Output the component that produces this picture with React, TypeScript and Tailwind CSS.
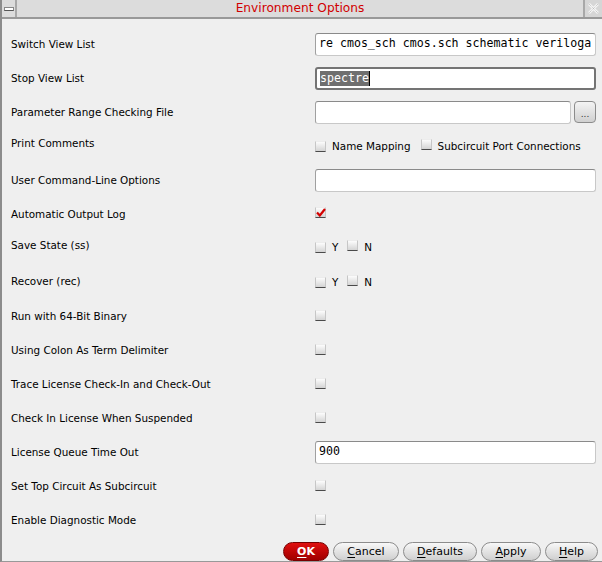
import React from "react";

const labelFont = { fontFamily: '"DejaVu Sans", sans-serif' };

function Checkbox({ checked = false }: { checked?: boolean }) {
  return (
    <span className="relative inline-block w-[11px] h-[11px] shrink-0 bg-gradient-to-b from-[#fcfcfc] to-[#d4d4d4] border border-[#c6c6c6] border-b-[#4a4a4a] border-t-[#ececec]">
      {checked && (
        <svg className="absolute left-[0px] top-[0px]" width="10" height="9" viewBox="0 0 10 9">
          <path d="M1 4.5 L3.8 7.5 L9 1" stroke="#d40000" strokeWidth="2.2" fill="none" />
        </svg>
      )}
    </span>
  );
}

function TextInput({ value, focused = false, selected = false, className = "" }: { value?: string; focused?: boolean; selected?: boolean; className?: string }) {
  return (
    <div
      className={
        "h-[23px] bg-white rounded-[3px] flex items-center px-[3px] overflow-hidden whitespace-nowrap text-[11.6px] text-black " +
        (focused
          ? "border-2 border-[#747474] px-[2px] "
          : "border border-[#c8c8c8] border-t-[#8a8a8a] border-l-[#a0a0a0] ") +
        className
      }
      style={{ fontFamily: '"DejaVu Sans Mono", monospace' }}
    >
      {selected ? (
        <>
          <span className="bg-[#6f6f6f] text-white leading-[15px]">{value}</span>
          <span className="inline-block w-[1.5px] h-[15px] bg-black" />
        </>
      ) : (
        value
      )}
    </div>
  );
}

function Row({ label, children, labelOffset = 0, contentOffset = 0 }: { label: string; children?: React.ReactNode; labelOffset?: number; contentOffset?: number }) {
  return (
    <div className="h-[34px] flex items-center">
      <div className="w-[313px] pl-[9px] text-[10.4px] text-black leading-none" style={{ ...labelFont, transform: `translateY(${labelOffset}px)` }}>
        {label}
      </div>
      <div className="flex-1 pr-[6px] flex items-center" style={{ transform: `translateY(${contentOffset}px)` }}>
        {children}
      </div>
    </div>
  );
}

function Btn({ label, u, w, primary = false }: { label: string; u: string; w: string; primary?: boolean }) {
  const rest = label.slice(1);
  return (
    <div
      className={
        "h-[19px] rounded-[10px] flex items-center justify-center text-[11px] leading-none border " +
        w +
        (primary
          ? " bg-gradient-to-b from-[#e01010] to-[#a00000] border-[#700] text-white font-bold"
          : " bg-gradient-to-b from-[#f8f8f8] to-[#cfcfcf] border-[#8c8c8c] text-black")
      }
      style={labelFont}
    >
      <span className="underline underline-offset-2">{u}</span>
      {rest}
    </div>
  );
}

function YN() {
  return (
    <div className="flex items-center text-[10.4px] text-black" style={labelFont}>
      <Checkbox />
      <span className="ml-[6px]">Y</span>
      <span className="ml-[9px]"><Checkbox /></span>
      <span className="ml-[6px]">N</span>
    </div>
  );
}

export default function App() {
  return (
    <div className="w-[602px] h-[562px] bg-[#efefef] border-l-2 border-[#8c8c8c] border-b border-b-[#999] flex flex-col overflow-hidden">
      {/* title bar */}
      <div className="h-[19px] flex bg-[#efefef] border-b-2 border-[#999] -ml-[2px]">
        <div className="w-[17px] bg-[#dcdcdc] border-r-2 border-[#a8a8a8] border-l-2 border-l-[#8c8c8c] flex items-center justify-center">
          <span className="w-[10px] h-[4px] bg-white border border-[#888] border-b-[#555]" />
        </div>
        <div className="flex-1 bg-[#dcdcdc] border-r-2 border-[#a8a8a8] flex items-center justify-center text-[12.2px] text-[#d10000] leading-none" style={labelFont}>
          Environment Options
        </div>
        <div className="w-[17px] bg-[#d6d6d6] flex items-center justify-center">
          <svg width="11" height="11" viewBox="0 0 11 11">
            <path d="M1 1 L10 10 M10 1 L1 10" stroke="#f4f4f4" strokeWidth="2.5" />
            <path d="M1 1 L10 10 M10 1 L1 10" stroke="#b8b8b8" strokeWidth="1" strokeDasharray="1 1" />
          </svg>
        </div>
      </div>

      <div className="pt-[8px] flex flex-col">
        <Row label="Switch View List">
          <TextInput value="re cmos_sch cmos.sch schematic veriloga" className="w-full" />
        </Row>
        <Row label="Stop View List">
          <TextInput value="spectre" focused selected className="w-full" />
        </Row>
        <Row label="Parameter Range Checking File">
          <TextInput value="" className="w-[256px]" />
          <div className="ml-[3px] w-[22px] h-[22px] rounded-[4px] border border-[#8c8c8c] bg-gradient-to-b from-[#f4f4f4] to-[#d0d0d0] flex items-end justify-center pb-[3px] text-[9px] leading-none text-[#333]" style={labelFont}>
            ...
          </div>
        </Row>
        <Row label="Print Comments" labelOffset={-3} contentOffset={1}>
          <div className="flex items-center text-[10.4px] text-black" style={labelFont}>
            <Checkbox />
            <span className="ml-[6px]">Name Mapping</span>
            <span className="ml-[10px]"><Checkbox /></span>
            <span className="ml-[6px]">Subcircuit Port Connections</span>
          </div>
        </Row>
        <Row label="User Command-Line Options">
          <TextInput value="" className="w-full" />
        </Row>
        <Row label="Automatic Output Log" contentOffset={-2}>
          <Checkbox checked />
        </Row>
        <Row label="Save State (ss)" labelOffset={-3} contentOffset={0}>
          <YN />
        </Row>
        <Row label="Recover (rec)" labelOffset={-1} contentOffset={1}>
          <YN />
        </Row>
        <Row label="Run with 64-Bit Binary" contentOffset={-1}>
          <Checkbox />
        </Row>
        <Row label="Using Colon As Term Delimiter" contentOffset={-1}>
          <Checkbox />
        </Row>
        <Row label="Trace License Check-In and Check-Out" contentOffset={-1}>
          <Checkbox />
        </Row>
        <Row label="Check In License When Suspended" contentOffset={-1}>
          <Checkbox />
        </Row>
        <Row label="License Queue Time Out">
          <TextInput value="900" className="w-full" />
        </Row>
        <Row label="Set Top Circuit As Subcircuit" contentOffset={-1}>
          <Checkbox />
        </Row>
        <Row label="Enable Diagnostic Mode" contentOffset={-1}>
          <Checkbox />
        </Row>
      </div>

      <div className="flex justify-end gap-[4px] pr-[4px] mt-[5px]">
        <Btn label="OK" u="O" w="w-[46px]" primary />
        <Btn label="Cancel" u="C" w="w-[66px]" />
        <Btn label="Defaults" u="D" w="w-[74px]" />
        <Btn label="Apply" u="A" w="w-[60px]" />
        <Btn label="Help" u="H" w="w-[53px]" />
      </div>
    </div>
  );
}
